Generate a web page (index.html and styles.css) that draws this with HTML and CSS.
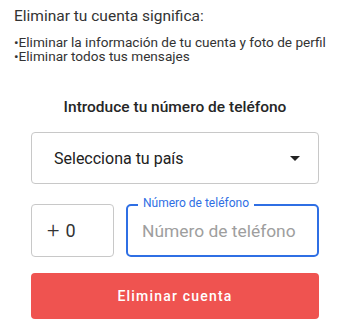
FILE: index.html
```
<!DOCTYPE html>
<html lang="es">
<head>
    <meta charset="UTF-8">
    <meta name="viewport" content="width=device-width, initial-scale=1.0">
    <title>Eliminar cuenta</title>
    <link rel="stylesheet" href="styles.css">
</head>
<body>

    <div class="info">
        <p class="info-title">Eliminar tu cuenta significa:</p>
        <ul class="info-list">
            <li>•Eliminar la información de tu cuenta y foto de perfil</li>
            <li>•Eliminar todos tus mensajes</li>
        </ul>
    </div>

    <form class="delete-form">
        <h2 class="form-title">Introduce tu número de teléfono</h2>

        <div class="country-select">
            <span>Selecciona tu país</span>
            <span class="caret"></span>
        </div>

        <div class="phone-row">
            <div class="prefix"><span class="plus">+</span><span>0</span></div>
            <div class="phone-field">
                <label class="phone-label">Número de teléfono</label>
                <input type="text" class="phone-input" placeholder="Número de teléfono">
            </div>
        </div>

        <button type="button" class="delete-btn">Eliminar cuenta</button>
    </form>

</body>
</html>
```

FILE: styles.css
```
body {
    margin: 0;
    padding: 0;
    font-family: Roboto, "Noto Sans", Arial, sans-serif;
    color: #333;
    background: #fff;
}

.info { padding: 7px 14px 0; }
.info-title { margin: 0; font-size: 15.5px; line-height: 18px; }
.info-list { list-style: none; margin: 10px 0 0; padding: 0; font-size: 13.6px; line-height: 14px; }

.delete-form { display: flex; flex-direction: column; margin: 0 31px; }

.form-title {
    margin: 35px 0 16px;
    text-align: center;
    font-size: 15.5px;
    line-height: 18px;
    font-weight: 500;
    color: #262626;
}

.country-select {
    display: flex;
    align-items: center;
    justify-content: space-between;
    height: 52px;
    box-sizing: border-box;
    padding: 0 18px 0 22px;
    border: 1px solid #c8c8c8;
    border-radius: 4px;
    font-size: 16px;
    color: #212121;
}
.caret {
    width: 0;
    height: 0;
    border-left: 5px solid transparent;
    border-right: 5px solid transparent;
    border-top: 5px solid #222;
}

.phone-row { display: flex; gap: 12px; margin-top: 20px; }

.prefix {
    display: flex;
    align-items: center;
    width: 83px;
    height: 53px;
    box-sizing: border-box;
    padding-left: 15px;
    border: 1px solid #c8c8c8;
    border-radius: 4px;
    font-size: 18px;
    color: #333;
}
.plus { margin-right: 6px; font-size: 22px; font-weight: 300; }

.phone-field { position: relative; flex: 1; }
.phone-input {
    width: 100%;
    height: 53px;
    box-sizing: border-box;
    padding: 0 0 0 14px;
    border: 2px solid #2f6fe4;
    border-radius: 5px;
    font-family: inherit;
    font-size: 17.4px;
    color: #212121;
    outline: none;
}
.phone-input::placeholder { color: #9e9e9e; }
.phone-label {
    position: absolute;
    top: -8px;
    left: 12px;
    padding: 0 5px;
    background: #fff;
    font-size: 12px;
    line-height: 14px;
    color: #2f6fe4;
}

.delete-btn {
    margin-top: 16px;
    height: 46px;
    border: none;
    border-radius: 4px;
    background: #ef5350;
    color: #fff;
    font-family: inherit;
    font-size: 14px;
    font-weight: 500;
    letter-spacing: 1.2px;
    cursor: pointer;
}
```
